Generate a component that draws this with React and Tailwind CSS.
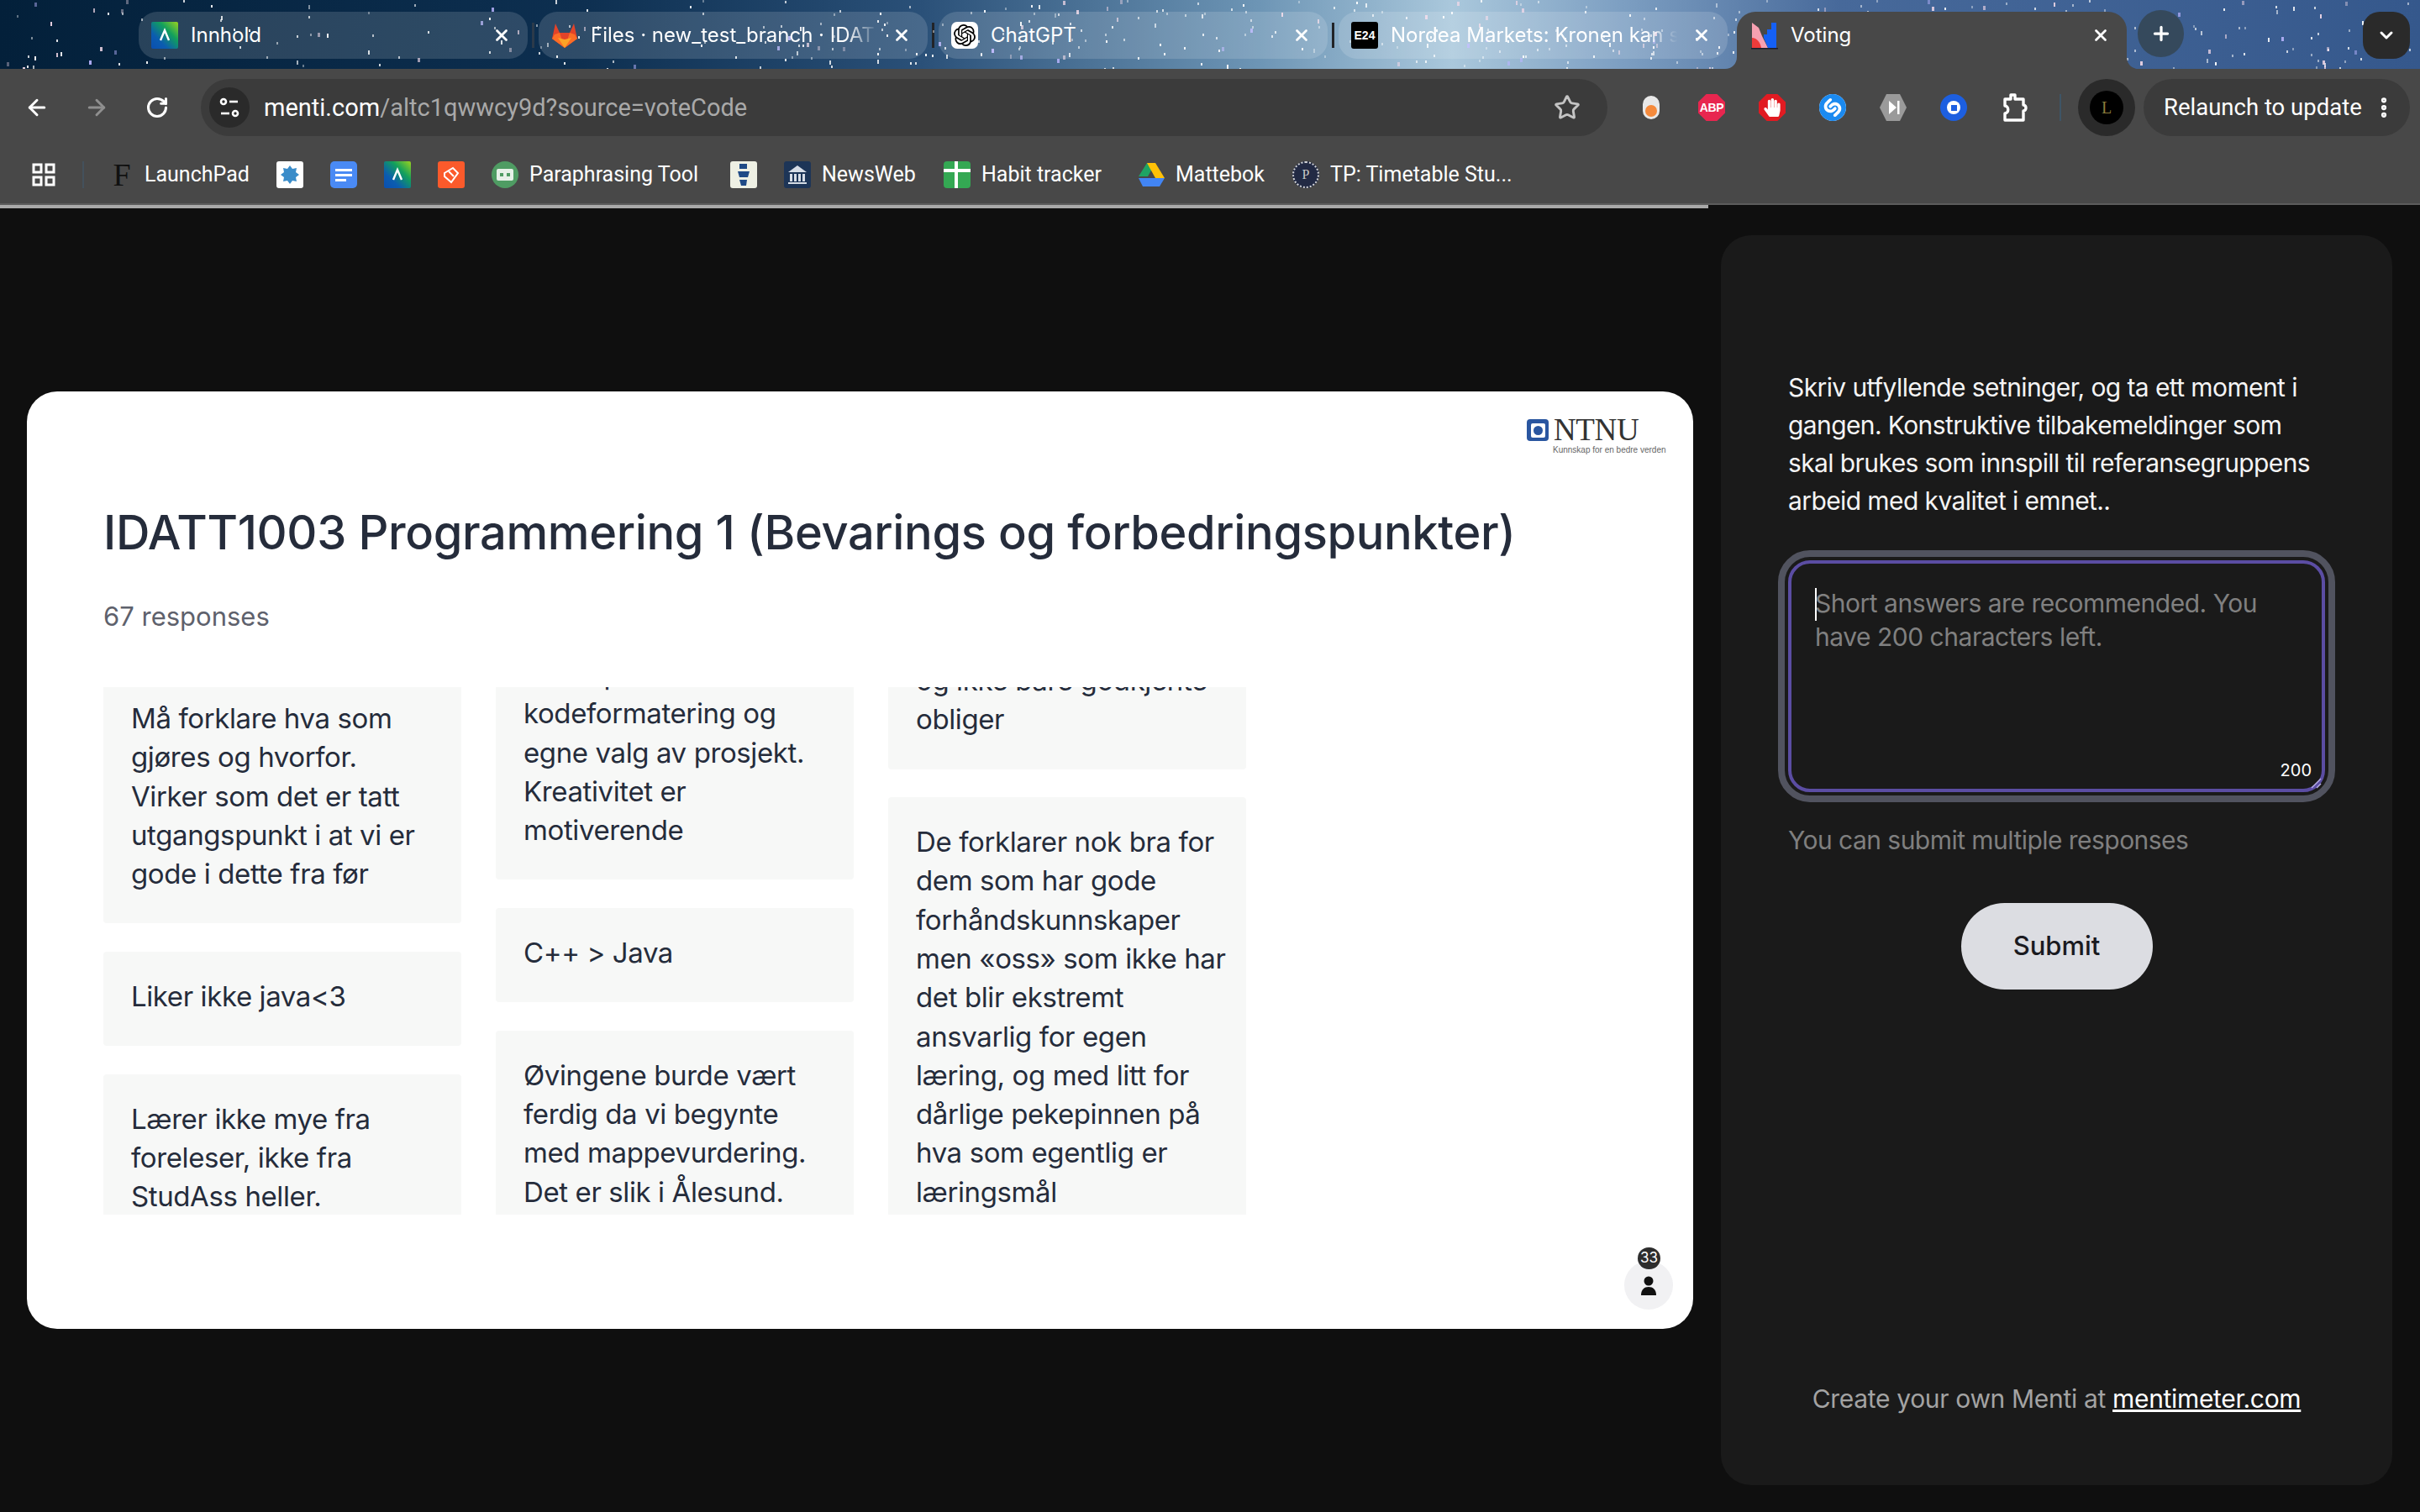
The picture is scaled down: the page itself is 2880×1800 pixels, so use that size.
import { ArrowLeft, ArrowRight, RotateCw, Star, X, Plus, ChevronDown, EllipsisVertical } from 'lucide-react'
import { SiOpenai, SiShazam } from 'react-icons/si'
import { FaHandPaper } from 'react-icons/fa'

// deterministic star field for the browser theme
const STARS = (() => {
    const out = []
    let s = 7
    const rnd = () => {
        s = (s * 16807) % 2147483647
        return s / 2147483647
    }
    for (let i = 0; i < 520; i++) {
        const x = Math.floor(rnd() * 2880)
        const y = Math.floor(rnd() * 82)
        if (x < 900 && rnd() < 0.55) continue
        const t = rnd()
        out.push({
            x, y,
            w: t > 0.85 ? 3 : 2,
            h: t > 0.7 ? 5 : 3,
            c: t > 0.93 ? '#b9b4ff' : t > 0.8 ? '#f3d9e8' : '#ffffff',
            o: 0.35 + rnd() * 0.6,
        })
    }
    return out
})()

const COL_1 = [
    ['Må forklare hva som', 'gjøres og hvorfor.', 'Virker som det er tatt', 'utgangspunkt i at vi er', 'gode i dette fra før'],
    ['Liker ikke java<3'],
    ['Lærer ikke mye fra', 'foreleser, ikke fra', 'StudAss heller.'],
]
const COL_2 = [
    ['Frihet på', 'kodeformatering og', 'egne valg av prosjekt.', 'Kreativitet er', 'motiverende'],
    ['C++ > Java'],
    ['Øvingene burde vært', 'ferdig da vi begynte', 'med mappevurdering.', 'Det er slik i Ålesund.'],
]
const COL_3 = [
    ['og ikke bare godkjente', 'obliger'],
    ['De forklarer nok bra for', 'dem som har gode', 'forhåndskunnskaper', 'men «oss» som ikke har', 'det blir ekstremt', 'ansvarlig for egen', 'læring, og med litt for', 'dårlige pekepinnen på', 'hva som egentlig er', 'læringsmål'],
]

function LearnIcon({ size = 32 }) {
    return (
        <svg width={size} height={size} viewBox="0 0 32 32" className="shrink-0">
            <defs>
                <linearGradient id="learn" x1="1" y1="0" x2="0" y2="1">
                    <stop offset="0" stopColor="#9ad21f" />
                    <stop offset="0.35" stopColor="#12a05c" />
                    <stop offset="0.7" stopColor="#0b5cb0" />
                    <stop offset="1" stopColor="#0a4fb0" />
                </linearGradient>
            </defs>
            <rect width="32" height="32" rx="2" fill="url(#learn)" />
            <path d="M11 22 L16 10 L21 22" fill="none" stroke="#fff" strokeWidth="2.4" />
        </svg>
    )
}

function GitlabIcon() {
    return (
        <svg width="32" height="32" viewBox="0 0 32 32" className="shrink-0">
            <path d="M16 31 L1 20 L5 2 L10 13 H22 L27 2 L31 20 Z" fill="#e24329" />
            <path d="M16 31 L1 20 L4 15 L10 13 Z" fill="#fc6d26" />
            <path d="M16 31 L31 20 L28 15 L22 13 Z" fill="#fc6d26" />
            <path d="M16 31 L8 19 L16 21 L24 19 Z" fill="#fca326" />
        </svg>
    )
}

function MentiIcon() {
    return (
        <svg width="32" height="34" viewBox="0 0 32 34" className="shrink-0">
            <path d="M1 2 L9 8 L13 18 L20 32 H1 Z" fill="#f7a1b2" />
            <path d="M1 20 C7 20 11 26 12 32 H1 Z" fill="#ef3b3b" />
            <path d="M19 10 H24 V2 H30 V32 H20 L15 20 V16 H19 Z" fill="#1560f5" />
            <rect y="32" width="32" height="1.5" fill="#1b1b2b" />
        </svg>
    )
}

function Tab({ icon, title, fade, active }) {
    return (
        <div className={active
            ? 'relative z-10 flex items-center w-[464px] h-[68px] shrink-0 rounded-t-[22px] bg-[#484848] pl-[17px] pr-[20px] pb-[12px] text-white'
            : 'relative z-10 flex items-center w-[463px] h-[56px] shrink-0 rounded-[22px] bg-white/[0.14] pl-[15px] pr-[20px] text-white'}>
            {active && (
                <>
                    <svg width="14" height="14" viewBox="0 0 14 14" className="absolute -left-[14px] bottom-0"><path d="M14 0 V14 H0 C8 14 14 8 14 0 Z" fill="#484848" /></svg>
                    <svg width="14" height="14" viewBox="0 0 14 14" className="absolute -right-[14px] bottom-0"><path d="M0 0 V14 H14 C6 14 0 8 0 0 Z" fill="#484848" /></svg>
                </>
            )}
            {icon}
            <span className={`ml-[15px] flex-1 overflow-hidden whitespace-nowrap text-[24px] font-['Inter',sans-serif] ${fade ? '[mask-image:linear-gradient(90deg,#000_88%,transparent_99%)]' : ''}`}>
                {title}
            </span>
            <X className="w-[22px] h-[22px] ml-[14px] shrink-0" strokeWidth={3} />
        </div>
    )
}

function TabSep({ dim }) {
    return <div className={`z-10 w-[3px] h-[30px] mx-[5px] shrink-0 ${dim ? 'bg-[#2b3a4a]' : 'bg-[#222428]'}`} />
}

function TabStrip() {
    return (
        <div className="relative h-[82px] overflow-hidden bg-[linear-gradient(90deg,#03203a_0%,#0d2f50_24%,#2a5078_38%,#6d95b5_52%,#aac8dc_60%,#7d9fc2_67%,#47699a_76%,#35588c_100%)]">
            <svg className="absolute inset-0" width="2880" height="82">
                {STARS.map((p, i) => (
                    <rect key={i} x={p.x} y={p.y} width={p.w} height={p.h} fill={p.c} opacity={p.o} />
                ))}
            </svg>
            <div className="flex items-start pl-[165px] pt-[14px]">
                <Tab icon={<LearnIcon />} title="Innhold" />
                <div className="mt-[13px]"><TabSep dim /></div>
                <Tab icon={<GitlabIcon />} title="Files · new_test_branch · IDAT" fade />
                <div className="mt-[13px]"><TabSep /></div>
                <Tab icon={<span className="flex items-center justify-center w-[32px] h-[32px] rounded-[7px] bg-white shrink-0"><SiOpenai className="w-[26px] h-[26px] text-black" /></span>} title="ChatGPT" />
                <div className="mt-[13px]"><TabSep /></div>
                <Tab icon={<span className="flex items-center justify-center w-[32px] h-[32px] rounded-[3px] bg-black text-white text-[14px] font-black shrink-0 font-['Liberation_Sans',sans-serif]">E24</span>} title="Nordea Markets: Kronen kan s" fade />
                <div className="w-[11px] shrink-0" />
                <Tab icon={<MentiIcon />} title="Voting" active />
                <div className="z-10 ml-[13px] -mt-[2px] flex items-center justify-center w-[55px] h-[56px] rounded-full bg-[#35495c] text-white">
                    <Plus className="w-[26px] h-[26px]" strokeWidth={3} />
                </div>
                <div className="z-10 ml-auto mr-[12px] flex items-center justify-center w-[56px] h-[56px] rounded-[20px] bg-[#2a2a2a] text-white">
                    <ChevronDown className="w-[24px] h-[24px]" strokeWidth={3} />
                </div>
            </div>
        </div>
    )
}

function TuneIcon() {
    return (
        <svg width="24" height="28" viewBox="0 0 24 28" fill="none" stroke="#fff" strokeWidth="2.6">
            <circle cx="5" cy="7" r="3" />
            <path d="M12 7 H22" />
            <path d="M2 21 H12" />
            <circle cx="19" cy="21" r="3" />
        </svg>
    )
}

function Hexagon({ fill, children }) {
    return (
        <svg width="32" height="32" viewBox="0 0 32 32">
            <path d="M8 0 H24 L32 16 L24 32 H8 L0 16 Z" fill={fill} />
            {children}
        </svg>
    )
}

function ExtensionsIcon() {
    return (
        <svg width="34" height="36" viewBox="0 0 34 36" fill="none" stroke="#fff" strokeWidth="3.4" strokeLinejoin="round" className="ml-[40px]">
            <path d="M5 8 H12 V3 H17 V8 H27 V15 C31 15 31 22 27 22 V33 H5 V25 C10 25 10 16 5 16 Z" />
        </svg>
    )
}

function Extensions() {
    return (
        <div className="flex items-center">
            <div className="flex items-center justify-center w-[32px]">
                <div className="flex flex-col justify-end w-[20px] h-[28px] rounded-full bg-[#e8e8e8] p-[3px]">
                    <div className="h-[14px] rounded-full bg-[#f58a3c]" />
                </div>
            </div>
            <div className="ml-[40px] flex items-center justify-center w-[32px] h-[32px] bg-[#e8264f] text-white text-[14px] font-bold tracking-[-0.03em] font-['Liberation_Sans',sans-serif] [clip-path:polygon(30%_0,70%_0,100%_30%,100%_70%,70%_100%,30%_100%,0_70%,0_30%)]">ABP</div>
            <div className="ml-[40px] flex items-center justify-center w-[32px] h-[32px] bg-[#e11b22] text-white [clip-path:polygon(30%_0,70%_0,100%_30%,100%_70%,70%_100%,30%_100%,0_70%,0_30%)]">
                <FaHandPaper className="w-[20px] h-[22px]" />
            </div>
            <div className="ml-[40px] flex items-center justify-center w-[32px] h-[32px] rounded-full bg-white text-[#1b8af0]">
                <SiShazam className="w-[32px] h-[32px]" />
            </div>
            <div className="ml-[40px] w-[32px] h-[32px]">
                <Hexagon fill="#9a9a9a">
                    <path d="M11 8 L20 16 L11 24 Z" fill="#fff" />
                    <rect x="21" y="8" width="2.5" height="16" fill="#fff" />
                </Hexagon>
            </div>
            <div className="ml-[40px] flex items-center justify-center w-[32px] h-[32px] rounded-full bg-[#1d5fe0]">
                <div className="flex items-center justify-center w-[16px] h-[16px] rounded-full bg-white">
                    <div className="w-[7px] h-[7px] bg-[#1d5fe0]" />
                </div>
            </div>
            <ExtensionsIcon />
        </div>
    )
}

function Toolbar() {
    return (
        <div className="flex items-center h-[68px] mt-[12px]">
            <ArrowLeft className="ml-[29px] w-[30px] h-[30px] text-white" strokeWidth={2.4} />
            <ArrowRight className="ml-[41px] w-[30px] h-[30px] text-[#8f8f8f]" strokeWidth={2.4} />
            <RotateCw className="ml-[43px] w-[28px] h-[28px] text-white" strokeWidth={2.6} />
            <div className="ml-[38px] flex items-center w-[1674px] h-[68px] rounded-full bg-[#3b3b3b] pl-[10px] pr-[32px]">
                <div className="flex items-center justify-center w-[48px] h-[48px] rounded-full bg-[#2a2a2a]">
                    <TuneIcon />
                </div>
                <div className="ml-[17px] pt-[2px] flex-1 text-[29px] whitespace-nowrap font-['Roboto',sans-serif] text-[#a9a9a9]">
                    <span className="text-white">menti.com</span>/altc1qwwcy9d?source=voteCode
                </div>
                <Star className="w-[32px] h-[32px] text-[#c4c4c4]" strokeWidth={2.2} />
            </div>
            <div className="ml-[36px]"><Extensions /></div>
            <div className="ml-[36px] w-[2px] h-[32px] bg-[#3e5566]" />
            <div className="ml-[20px] flex items-center justify-center w-[68px] h-[68px] rounded-full bg-[#2a2a2a]">
                <div className="flex items-center justify-center w-[40px] h-[40px] rounded-full bg-black text-[#8a7a3a] text-[20px] font-['Liberation_Serif',serif]">L</div>
            </div>
            <div className="ml-[10px] flex items-center justify-between w-[317px] h-[68px] rounded-full bg-[#3b3b3b] pl-[24px] pr-[16px] text-white">
                <span className="text-[27.5px] whitespace-nowrap font-['Roboto',sans-serif]">Relaunch to update</span>
                <EllipsisVertical className="w-[30px] h-[30px]" strokeWidth={3} />
            </div>
        </div>
    )
}

function Bookmark({ icon, label, width, gap }) {
    return (
        <div className={`flex items-center h-[32px] shrink-0 ${gap}`}>
            {icon}
            {label && <span className={`ml-[13px] text-[25px] whitespace-nowrap text-white font-['Roboto',sans-serif] ${width}`}>{label}</span>}
        </div>
    )
}

function Square({ bg, children }) {
    return <span className={`flex items-center justify-center w-[32px] h-[32px] rounded-[3px] shrink-0 overflow-hidden ${bg}`}>{children}</span>
}

function BookmarksBar() {
    return (
        <div className="flex items-center h-[32px] mt-[30px] pl-[38px]">
            <svg width="28" height="28" viewBox="0 0 28 28" fill="none" stroke="#fff" strokeWidth="3" className="shrink-0">
                <rect x="2" y="2" width="9" height="9" />
                <rect x="17" y="2" width="9" height="9" />
                <rect x="2" y="17" width="9" height="9" />
                <rect x="17" y="17" width="9" height="9" />
            </svg>
            <div className="ml-[32px] w-[2px] h-[32px] bg-[#43515c]" />
            <Bookmark gap="ml-[31px]" width="w-[124px]" label="LaunchPad" icon={<span className="w-[28px] text-center text-[38px] leading-[32px] text-[#111] font-['Liberation_Serif',serif]">F</span>} />
            <Bookmark gap="ml-[33px]" icon={<Square bg="bg-white"><svg width="24" height="24" viewBox="0 0 24 24"><path d="M12 1 L15 5 L20 4 L19 9 L23 12 L19 15 L20 20 L15 19 L12 23 L9 19 L4 20 L5 15 L1 12 L5 9 L4 4 L9 5 Z" fill="#3a8cc9" /></svg></Square>} />
            <Bookmark gap="ml-[32px]" icon={<Square bg="bg-[#4a8af4] rounded-[5px]"><span className="flex flex-col gap-[3px] w-[20px]"><span className="h-[3px] bg-white" /><span className="h-[3px] bg-white" /><span className="h-[3px] w-[13px] bg-white" /></span></Square>} />
            <Bookmark gap="ml-[32px]" icon={<LearnIcon />} />
            <Bookmark gap="ml-[32px]" icon={<Square bg="bg-[#fb5a2b]"><svg width="24" height="24" viewBox="0 0 24 24" fill="none" stroke="#fff" strokeWidth="2"><path d="M4 10 L14 4 L20 10 L12 21 L4 14 Z" /><path d="M9 8 L15 14" /></svg></Square>} />
            <Bookmark gap="ml-[32px]" width="w-[199px]" label="Paraphrasing Tool" icon={<span className="flex items-center justify-center w-[32px] h-[32px] rounded-full bg-[#4f9c63] shrink-0"><span className="flex items-center justify-center gap-[4px] w-[20px] h-[14px] rounded-[2px] bg-[#e6f1e8]"><span className="w-[4px] h-[4px] bg-[#4f9c63]" /><span className="w-[4px] h-[4px] bg-[#4f9c63]" /></span></span>} />
            <Bookmark gap="ml-[40px]" icon={<Square bg="bg-[#eef0e4]"><svg width="20" height="30" viewBox="0 0 20 30" fill="#1f4a86"><path d="M5 2 H14 V8 H5 Z" /><path d="M3 11 H17 L15 18 H5 Z" /><path d="M5 21 H14 L13 28 H7 Z" /></svg></Square>} />
            <Bookmark gap="ml-[32px]" width="w-[111px]" label="NewsWeb" icon={<Square bg="bg-[#1d3557]"><svg width="26" height="26" viewBox="0 0 26 26" fill="#d7dde6"><path d="M13 2 L24 10 H2 Z" /><rect x="4" y="12" width="3" height="9" /><rect x="9" y="12" width="3" height="9" /><rect x="14" y="12" width="3" height="9" /><rect x="19" y="12" width="3" height="9" /><rect x="2" y="22" width="22" height="2" /></svg></Square>} />
            <Bookmark gap="ml-[34px]" width="w-[145px]" label="Habit tracker" icon={<Square bg="bg-[#34a853] rounded-[4px]"><svg width="32" height="32" viewBox="0 0 32 32"><rect x="13" y="0" width="4" height="32" fill="#fff" /><rect x="0" y="9" width="32" height="4" fill="#fff" /></svg></Square>} />
            <Bookmark gap="ml-[41px]" width="w-[105px]" label="Mattebok" icon={<svg width="32" height="30" viewBox="0 0 32 30" className="shrink-0"><path d="M11 1 H21 L12 17 H1 Z" fill="#1fa463" /><path d="M21 1 L32 19 H21 L11 1 Z" fill="#ffc107" /><path d="M8 19 H32 L26 29 H6 L1 19 Z" fill="#4285f4" /></svg>} />
            <Bookmark gap="ml-[34px]" width="w-[219px]" label="TP: Timetable Stu..." icon={<span className="flex items-center justify-center w-[32px] h-[32px] rounded-full border-2 border-dotted border-white/80 bg-[#222a44] text-[#c8c8c8] text-[16px] shrink-0 font-['Liberation_Serif',serif]">P</span>} />
        </div>
    )
}

function ResponseCard({ lines }) {
    return (
        <div className="rounded-[4px] bg-[#f7f8f7] pl-[33px] pt-[30px] pb-[36px]">
            {lines.map(l => (
                <div key={l} className="h-[46.3px] text-[33px] leading-[46.3px] tracking-[-0.012em] whitespace-nowrap text-[#252c3b]">{l}</div>
            ))}
        </div>
    )
}

function ResponseColumn({ cards, offset }) {
    return (
        <div className={`flex flex-col gap-[33.5px] w-[426px] shrink-0 ${offset}`}>
            {cards.map(lines => <ResponseCard key={lines[0]} lines={lines} />)}
        </div>
    )
}

function Slide() {
    return (
        <div className="relative self-center w-[1983px] h-[1116px] shrink-0 rounded-[36px] bg-white px-[91px] pt-[132px] font-['Inter',sans-serif]">
            {/* NTNU logo */}
            <div className="absolute left-[1785px] top-[33px]">
                <div className="flex items-center gap-[6px] h-[26px]">
                    <div className="flex items-center justify-center w-[26px] h-[26px] rounded-[4px] bg-[#2a56a0]">
                        <div className="flex items-center justify-center w-[17px] h-[17px] rounded-[2px] bg-white">
                            <div className="w-[11px] h-[11px] rounded-full bg-[#2a56a0]" />
                        </div>
                    </div>
                    <span className="text-[37px] leading-[26px] tracking-[-0.01em] text-[#333] font-['Liberation_Serif',serif]">NTNU</span>
                </div>
                <div className="mt-[4px] ml-[31px] text-[10px] leading-[14px] whitespace-nowrap text-[#666] font-['Liberation_Sans',sans-serif]">Kunnskap for en bedre verden</div>
            </div>

            <h1 className="text-[56px] leading-[72px] font-medium tracking-[-0.0067em] whitespace-nowrap text-[#252c3b]">
                IDATT1003 Programmering 1 (Bevarings og forbedringspunkter)
            </h1>
            <p className="mt-[44px] text-[31px] leading-[40px] text-[#5e616c]">67 responses</p>

            <div className="flex gap-[41px] h-[628px] mt-[64px] overflow-hidden">
                <ResponseColumn cards={COL_1} offset="-mt-[16px]" />
                <ResponseColumn cards={COL_2} offset="-mt-[68px]" />
                <ResponseColumn cards={COL_3} offset="-mt-[61px]" />
            </div>

            {/* participants */}
            <div className="absolute left-[1901px] top-[1035px] flex items-center justify-center w-[58px] h-[58px] rounded-full bg-[#f1f1f3]">
                <svg width="26" height="24" viewBox="0 0 26 24" className="mt-[2px]">
                    <circle cx="13" cy="6" r="5.5" fill="#111" />
                    <path d="M4 23 C4 16 8 13 13 13 C18 13 22 16 22 23 Z" fill="#111" />
                </svg>
            </div>
            <div className="absolute left-[1917px] top-[1019px] flex items-center justify-center w-[27px] h-[26px] rounded-full bg-[#2d2d2d] text-[17px] text-white">33</div>
        </div>
    )
}

function VotePanel() {
    return (
        <div className="flex flex-col w-[799px] shrink-0 rounded-[36px] bg-[#1a1a1a] px-[80px] pt-[159px] pb-[81px] font-['Inter',sans-serif]">
            <p className="text-[30px] leading-[45px] tracking-[-0.02em] whitespace-nowrap text-[#f4f4f4]">
                Skriv utfyllende setninger, og ta ett moment i<br />
                gangen. Konstruktive tilbakemeldinger som<br />
                skal brukes som innspill til referansegruppens<br />
                arbeid med kvalitet i emnet..
            </p>

            <div className="relative mt-[48px] h-[276px] rounded-[26px] border-4 border-[#5b4da3] outline-8 outline-offset-4 outline-[#51535f] px-[28px] pt-[27px]">
                <p className="text-[30px] leading-[40px] tracking-[-0.016em] whitespace-nowrap text-[#808080]">
                    Short answers are recommended. You<br />
                    have 200 characters left.
                </p>
                <div className="absolute left-[28px] top-[29px] w-[2px] h-[39px] bg-white" />
                <span className="absolute right-[12px] bottom-[10px] text-[20px] leading-[24px] text-white">200</span>
                <svg width="14" height="14" viewBox="0 0 14 14" className="absolute right-[0px] bottom-[0px]" stroke="#b9b0e6" strokeWidth="1.5">
                    <path d="M13 2 L2 13" />
                    <path d="M13 8 L8 13" />
                </svg>
            </div>

            <p className="mt-[35px] text-[30px] leading-[44px] tracking-[-0.018em] whitespace-nowrap text-[#7f7f7f]">You can submit multiple responses</p>

            <button className="self-center mt-[53px] w-[228px] h-[103px] rounded-full bg-[#dcdde2] text-[31px] font-medium text-[#1a1a1f]">Submit</button>

            <p className="mt-auto text-center text-[30px] leading-[44px] tracking-[-0.011em] whitespace-nowrap text-[#a3a3a3]">
                Create your own Menti at <span className="text-white underline">mentimeter.com</span>
            </p>
        </div>
    )
}

export default function App() {
    return (
        <div className="flex flex-col w-[2880px] h-[1800px] overflow-hidden bg-[#0f0f0f]">
            <TabStrip />
            <div className="h-[160px] shrink-0 bg-[#484848]">
                <Toolbar />
                <BookmarksBar />
            </div>
            <div className="flex h-[6px] shrink-0 flex-col">
                <div className="h-[2px] bg-[#5c5c5c]" />
                <div className="h-[4px] w-[2033px] bg-[#a8a8a8]" />
            </div>
            <div className="flex flex-1 gap-[33px] min-h-0 p-[32px]">
                <Slide />
                <VotePanel />
            </div>
        </div>
    )
}
